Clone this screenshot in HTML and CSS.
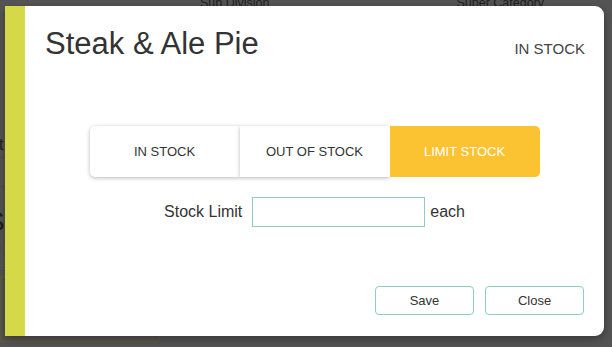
FILE: index.html
```html
<!DOCTYPE html>
<html lang="en">
<head>
    <meta charset="UTF-8">
    <meta name="viewport" content="width=device-width, initial-scale=1.0">
    <title>Stock Status</title>
    <link rel="stylesheet" href="styles.css">
</head>
<body>
    <!-- Page behind the modal (dimmed) -->
    <div class="page">
        <div class="page-head">
            <span class="col col-sub">Sub Division</span>
            <span class="col col-super">Super Category</span>
        </div>
        <div class="page-side">
            <div class="side-row side-first">nt</div>
            <div class="side-row"></div>
            <div class="side-big">S</div>
            <div class="side-small">u</div>
            <div class="side-box"></div>
        </div>
    </div>

    <!-- Modal -->
    <div class="modal">
        <div class="modal-accent"></div>
        <div class="modal-body">
            <div class="modal-header">
                <h1 class="item-name">Steak &amp; Ale Pie</h1>
                <span class="item-status">IN STOCK</span>
            </div>

            <div class="stock-toggle">
                <button class="toggle-btn">IN STOCK</button>
                <button class="toggle-btn">OUT OF STOCK</button>
                <button class="toggle-btn active">LIMIT STOCK</button>
            </div>

            <div class="limit-row">
                <label for="stock-limit">Stock Limit</label>
                <input type="text" id="stock-limit">
                <span>each</span>
            </div>

            <div class="modal-footer">
                <button class="footer-btn">Save</button>
                <button class="footer-btn">Close</button>
            </div>
        </div>
    </div>
</body>
</html>
```

FILE: styles.css
```css
body {
    margin: 0;
    padding: 0;
    width: 612px;
    height: 347px;
    overflow: hidden;
    background-color: #545454;
    font-family: 'Liberation Sans', Arial, sans-serif;
    color: #333;
    position: relative;
}

/* Dimmed page */
.page {
    color: #1f1f1f;
}

.page-head {
    display: flex;
    height: 6px;
    overflow: hidden;
}

.page-head .col {
    font-size: 12.5px;
    line-height: 14px;
    margin-top: -4px;
}

.col-sub {
    margin-left: 200px;
}

.col-super {
    margin-left: 187px;
}

.page-side {
    width: 60px;
    padding-top: 125px;
}

.side-row {
    height: 28px;
    border-bottom: 1px solid #3c5555;
    font-size: 16px;
    line-height: 28px;
    margin-left: -10px;
}

.side-first {
    height: 26px;
}

.side-big {
    font-size: 28px;
    line-height: 30px;
    margin-top: 20px;
    margin-left: -14px;
}

.side-small {
    font-size: 16px;
    line-height: 20px;
    margin-left: -8px;
    padding-bottom: 8px;
    border-bottom: 1px solid #5d5f2e;
}

.side-box {
    width: 158px;
    height: 64px;
    margin-top: 10px;
    border: 1px solid #5d5f2e;
    border-radius: 0 0 4px 0;
}

/* Modal */
.modal {
    position: absolute;
    left: 5px;
    top: 6px;
    width: 599px;
    height: 330px;
    display: flex;
    border-radius: 0 9px 9px 0;
    box-shadow: 0 3px 8px rgba(0, 0, 0, 0.35);
}

.modal-accent {
    width: 20px;
    background-color: #d6d947;
}

.modal-body {
    flex: 1;
    background-color: #fff;
    border-radius: 0 9px 9px 0;
    display: flex;
    flex-direction: column;
}

.modal-header {
    display: flex;
    justify-content: space-between;
    align-items: baseline;
    padding: 20px 19px 0 20px;
}

.item-name {
    margin: 0;
    font-size: 31px;
    font-weight: normal;
    color: #333;
}

.item-status {
    font-size: 15px;
    color: #444;
}

.stock-toggle {
    display: flex;
    align-self: center;
    margin-top: 64px;
    width: 450px;
    height: 51px;
}

.toggle-btn {
    flex: 1;
    border: none;
    background-color: #fff;
    font-family: inherit;
    font-size: 13px;
    color: #333;
    box-shadow: 0 1px 4px rgba(0, 0, 0, 0.28);
    cursor: pointer;
}

.toggle-btn:first-child {
    border-radius: 5px 0 0 5px;
}

.toggle-btn.active {
    background-color: #fbc331;
    color: #fff;
    box-shadow: none;
    border-radius: 0 5px 5px 0;
}

.limit-row {
    display: flex;
    align-items: center;
    justify-content: center;
    margin-top: 20px;
    font-size: 16px;
    color: #333;
}

.limit-row label {
    margin-right: 10px;
}

.limit-row input {
    width: 171px;
    height: 28px;
    padding: 0;
    border: 1px solid #8dcdc7;
    margin-right: 5px;
}

.modal-footer {
    display: flex;
    justify-content: flex-end;
    gap: 11px;
    margin-top: auto;
    padding: 0 20px 21px 0;
}

.footer-btn {
    width: 99px;
    height: 29px;
    background-color: #fff;
    border: 1px solid #8dcdc7;
    border-radius: 4px;
    font-family: inherit;
    font-size: 13px;
    color: #333;
    cursor: pointer;
}
```
